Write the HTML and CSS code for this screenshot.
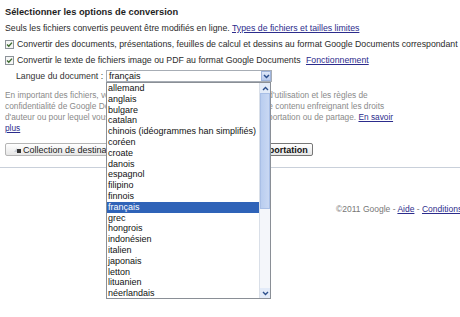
FILE: index.html
```html
<!DOCTYPE html>
<html lang="fr">
<head>
  <meta charset="UTF-8" />
  <title>Importer des fichiers - Google Documents</title>
  <link rel="stylesheet" href="styles.css">
</head>
<body>

  <div class="options">
    <h2 class="title">Sélectionner les options de conversion</h2>
    <p class="line">Seuls les fichiers convertis peuvent être modifiés en ligne. <a href="#">Types de fichiers et tailles limites</a></p>

    <label class="check">
      <span class="box"><svg width="9" height="9" viewBox="0 0 9 9"><path d="M2 4.5 L3.8 6.3 L7 2.6" fill="none" stroke="#3d6b2f" stroke-width="1.4"/></svg></span>
      Convertir des documents, présentations, feuilles de calcul et dessins au format Google Documents correspondant
    </label>
    <label class="check">
      <span class="box"><svg width="9" height="9" viewBox="0 0 9 9"><path d="M2 4.5 L3.8 6.3 L7 2.6" fill="none" stroke="#3d6b2f" stroke-width="1.4"/></svg></span>
      Convertir le texte de fichiers image ou PDF au format Google Documents&nbsp;<a href="#">Fonctionnement</a>
    </label>

    <div class="lang-row">
      <span class="lang-label">Langue du document :</span>
      <div class="select">
        <span class="select-value">français</span>
        <span class="select-arrow"><svg width="7" height="5" viewBox="0 0 7 5"><path d="M1 1 L3.5 3.5 L6 1" fill="none" stroke="#2c4f8c" stroke-width="1.5"/></svg></span>

        <div class="dropdown">
          <ul class="option-list">
            <li>allemand</li>
            <li>anglais</li>
            <li>bulgare</li>
            <li>catalan</li>
            <li>chinois (idéogrammes han simplifiés)</li>
            <li>coréen</li>
            <li>croate</li>
            <li>danois</li>
            <li>espagnol</li>
            <li>filipino</li>
            <li>finnois</li>
            <li class="selected">français</li>
            <li>grec</li>
            <li>hongrois</li>
            <li>indonésien</li>
            <li>italien</li>
            <li>japonais</li>
            <li>letton</li>
            <li>lituanien</li>
            <li>néerlandais</li>
          </ul>
          <div class="scrollbar">
            <span class="scroll-btn"><svg width="7" height="5" viewBox="0 0 7 5"><path d="M1 4 L3.5 1.5 L6 4" fill="none" stroke="#2c4f8c" stroke-width="1.4"/></svg></span>
            <span class="scroll-thumb"></span>
            <span class="scroll-track"></span>
            <span class="scroll-btn"><svg width="7" height="5" viewBox="0 0 7 5"><path d="M1 1 L3.5 3.5 L6 1" fill="none" stroke="#2c4f8c" stroke-width="1.4"/></svg></span>
          </div>
        </div>
      </div>
    </div>

    <p class="notice">
      En important des fichiers, vous certifiez avoir lu et validé les Conditions d'utilisation et les règles de<br>
      confidentialité de Google Docs. Vous vous engagez à ne pas importer de contenu enfreignant les droits<br>
      d'auteur ou pour lequel vous n'avez pas obtenu les droits adéquats d'importation ou de partage. <a href="#">En savoir</a><br>
      <a href="#">plus</a>
    </p>

    <div class="buttons">
      <button class="btn">
        <svg width="7" height="6" viewBox="0 0 7 6"><path d="M0 5 L3 1 L3 5 Z" fill="#c9ced6"/><rect x="3" y="2" width="4" height="4" fill="#333"/></svg>
        Collection de destination : Mes documents
      </button>
      <button class="btn btn-start">Démarrer l'importation</button>
    </div>
  </div>

  <div class="footer">
    ©2011 Google - <a href="#">Aide</a> - <a href="#">Conditions d'utilisation</a> - <a href="#">Règles de confidentialité</a>
  </div>

</body>
</html>
```

FILE: styles.css
```css
* {
  margin: 0;
  padding: 0;
  box-sizing: border-box;
  font-family: 'Liberation Sans', Arial, sans-serif;
}

body {
  background-color: white;
  color: #2b2b2b;
  font-size: 8.75px;
  width: 460px;
  height: 317px;
  overflow: hidden;
  white-space: nowrap;
}

a {
  color: #2c2c8c;
  text-decoration: underline;
}

.options {
  padding: 7px 0 0 5px;
  border-bottom: 1px solid #c9d0da;
  height: 168px;
}

.title {
  font-size: 9.3px;
  font-weight: bold;
  color: #1e1e1e;
  line-height: 11px;
  margin-bottom: 4px;
}

.line {
  line-height: 13px;
  margin-bottom: 3px;
}

.check {
  display: flex;
  align-items: center;
  gap: 3px;
  line-height: 13px;
  margin-bottom: 3px;
}

.box {
  display: inline-block;
  width: 9px;
  height: 9px;
  border: 1px solid #8d9399;
  background-color: #f6f6f6;
  line-height: 0;
}

.box svg {
  margin: -1px 0 0 -1px;
}

.lang-row {
  display: flex;
  align-items: center;
  padding-left: 11px;
  margin-top: 3px;
}

.lang-label {
  width: 90px;
  color: #333;
}

.select {
  position: relative;
  width: 166px;
  height: 12px;
  border: 1px solid #a7adb5;
  display: flex;
  align-items: center;
  justify-content: space-between;
}

.select-value {
  padding-left: 2px;
  color: #111;
  font-size: 9px;
}

.select-arrow {
  width: 10px;
  height: 10px;
  background: linear-gradient(#dfe8f8, #b9cbee);
  border: 1px solid #9fb4dc;
  display: flex;
  align-items: center;
  justify-content: center;
}

/* open list of the select, drawn over the notice */
.dropdown {
  position: absolute;
  top: 11px;
  left: -1px;
  width: 165px;
  height: 217px;
  background-color: white;
  border: 1px solid #8a8f96;
  display: flex;
  z-index: 2;
}

.option-list {
  list-style: none;
  flex: 1;
}

.option-list li {
  height: 10.8px;
  line-height: 10.8px;
  padding-left: 1px;
  color: #111;
  font-size: 9px;
}

.option-list li.selected {
  background-color: #2f63b8;
  color: white;
}

.scrollbar {
  width: 11px;
  display: flex;
  flex-direction: column;
  background-color: #f4f6fa;
  border-left: 1px solid #d9dfe8;
}

.scroll-btn {
  height: 10px;
  display: flex;
  align-items: center;
  justify-content: center;
  background-color: #e3ebf8;
}

.scroll-thumb {
  height: 116px;
  background: linear-gradient(90deg, #b9cdef, #c9d8f3);
  border: 1px solid #a9bfe6;
}

.scroll-track {
  flex: 1;
}

.notice {
  color: #8a8a8a;
  font-size: 8.3px;
  line-height: 11px;
  margin-top: 8px;
}

.buttons {
  display: flex;
  gap: 9px;
  margin-top: 9px;
}

.btn {
  display: flex;
  align-items: center;
  gap: 2px;
  height: 13px;
  padding: 0 4px 0 8px;
  font-size: 9px;
  color: #222;
  border: 1px solid #b5b5b5;
  border-radius: 2px;
  background: linear-gradient(#ffffff, #e6e6e6);
}

.btn-start {
  padding: 0 4px;
  font-weight: bold;
  color: #111;
  border-color: #777;
}

.footer {
  padding: 36px 0 0 336px;
  color: #777;
  font-size: 8.5px;
}

.footer a {
  color: #2c2c8c;
}
```
